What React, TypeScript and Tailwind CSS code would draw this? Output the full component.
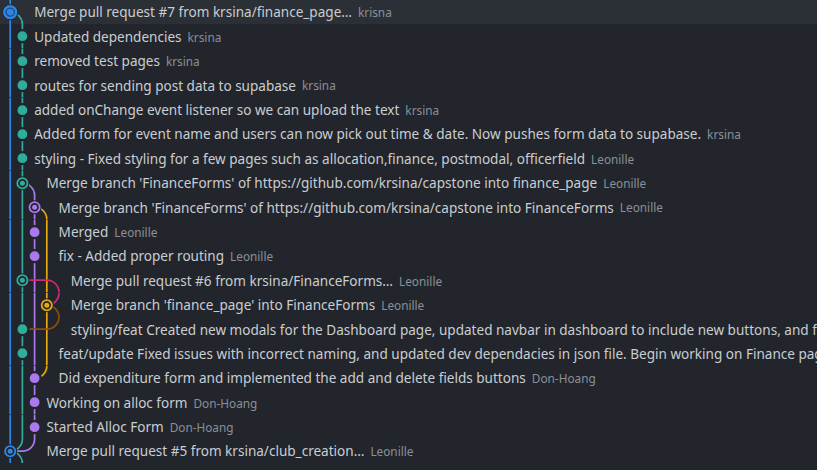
import React from "react";

// swimlane geometry (px)
const H = 24.4;
const C = H / 2;
const SW = 12.2;
const X = (k: number) => 10.2 + SW * k;

const BG = "#22262c";
const B = "#2f86e2";
const T = "#2fac9c";
const P = "#ab78f0";
const O = "#e8a90f";
const K = "#d0287a";
const N = "#8f4d08";

type Seg =
  | { t: "v"; k: number; c: string; part?: "top" | "bottom" }
  | { t: "out"; from: number; to: number; c: string }
  | { t: "in"; from: number; to: number; c: string };

type Dot = { k: number; c: string; kind: "dot" | "merge" | "head" };

type Row = {
  subject: string;
  author: string;
  lanes: number;
  segs: Seg[];
  dot: Dot;
  selected?: boolean;
};

const v = (k: number, c: string, part?: "top" | "bottom"): Seg => ({ t: "v", k, c, part });
const out = (from: number, to: number, c: string): Seg => ({ t: "out", from, to, c });
const inn = (from: number, to: number, c: string): Seg => ({ t: "in", from, to, c });

const rows: Row[] = [
  {
    subject: "Merge pull request #7 from krsina/finance_page…",
    author: "krisna",
    lanes: 2,
    segs: [v(0, B), out(0, 1, T)],
    dot: { k: 0, c: B, kind: "head" },
    selected: true,
  },
  { subject: "Updated dependencies", author: "krsina", lanes: 2, segs: [v(0, B), v(1, T)], dot: { k: 1, c: T, kind: "dot" } },
  { subject: "removed test pages", author: "krsina", lanes: 2, segs: [v(0, B), v(1, T)], dot: { k: 1, c: T, kind: "dot" } },
  { subject: "routes for sending post data to supabase", author: "krsina", lanes: 2, segs: [v(0, B), v(1, T)], dot: { k: 1, c: T, kind: "dot" } },
  { subject: "added onChange event listener so we can upload the text", author: "krsina", lanes: 2, segs: [v(0, B), v(1, T)], dot: { k: 1, c: T, kind: "dot" } },
  {
    subject: "Added form for event name and users can now pick out time & date. Now pushes form data to supabase.",
    author: "krsina",
    lanes: 2,
    segs: [v(0, B), v(1, T)],
    dot: { k: 1, c: T, kind: "dot" },
  },
  {
    subject: "styling - Fixed styling for a few pages such as allocation,finance, postmodal, officerfield",
    author: "Leonille",
    lanes: 2,
    segs: [v(0, B), v(1, T)],
    dot: { k: 1, c: T, kind: "dot" },
  },
  {
    subject: "Merge branch 'FinanceForms' of https://github.com/krsina/capstone into finance_page",
    author: "Leonille",
    lanes: 3,
    segs: [v(0, B), v(1, T), out(1, 2, P)],
    dot: { k: 1, c: T, kind: "merge" },
  },
  {
    subject: "Merge branch 'FinanceForms' of https://github.com/krsina/capstone into FinanceForms",
    author: "Leonille",
    lanes: 4,
    segs: [v(0, B), v(1, T), v(2, P), out(2, 3, O)],
    dot: { k: 2, c: P, kind: "merge" },
  },
  { subject: "Merged", author: "Leonille", lanes: 4, segs: [v(0, B), v(1, T), v(2, P), v(3, O)], dot: { k: 2, c: P, kind: "dot" } },
  { subject: "fix - Added proper routing", author: "Leonille", lanes: 4, segs: [v(0, B), v(1, T), v(2, P), v(3, O)], dot: { k: 2, c: P, kind: "dot" } },
  {
    subject: "Merge pull request #6 from krsina/FinanceForms…",
    author: "Leonille",
    lanes: 5,
    segs: [v(0, B), v(1, T), v(2, P), v(3, O), out(1, 4, K)],
    dot: { k: 1, c: T, kind: "merge" },
  },
  {
    subject: "Merge branch 'finance_page' into FinanceForms",
    author: "Leonille",
    lanes: 5,
    segs: [v(0, B), v(1, T), v(2, P), v(3, O), inn(4, 3, K), out(3, 4, N)],
    dot: { k: 3, c: O, kind: "merge" },
  },
  {
    subject:
      "styling/feat Created new modals for the Dashboard page, updated navbar in dashboard to include new buttons, and fixed the finance page layout",
    author: "Leonille",
    lanes: 5,
    segs: [v(0, B), v(1, T), v(2, P), v(3, O), inn(4, 1, N)],
    dot: { k: 1, c: T, kind: "dot" },
  },
  {
    subject:
      "feat/update Fixed issues with incorrect naming, and updated dev dependacies in json file. Begin working on Finance page",
    author: "Leonille",
    lanes: 4,
    segs: [v(0, B), v(1, T), v(2, P), v(3, O)],
    dot: { k: 1, c: T, kind: "dot" },
  },
  {
    subject: "Did expenditure form and implemented the add and delete fields buttons",
    author: "Don-Hoang",
    lanes: 4,
    segs: [v(0, B), v(1, T), v(2, P), inn(3, 2, O)],
    dot: { k: 2, c: P, kind: "dot" },
  },
  { subject: "Working on alloc form", author: "Don-Hoang", lanes: 3, segs: [v(0, B), v(1, T), v(2, P)], dot: { k: 2, c: P, kind: "dot" } },
  { subject: "Started Alloc Form", author: "Don-Hoang", lanes: 3, segs: [v(0, B), v(1, T), v(2, P)], dot: { k: 2, c: P, kind: "dot" } },
  {
    subject: "Merge pull request #5 from krsina/club_creation…",
    author: "Leonille",
    lanes: 3,
    segs: [v(0, B), inn(1, 0, T), inn(2, 0, P), out(0, 1, T)],
    dot: { k: 0, c: B, kind: "merge" },
  },
];

function segPath(s: Seg) {
  if (s.t === "v") {
    const y1 = s.part === "bottom" ? C : 0;
    const y2 = s.part === "top" ? C : H;
    return `M ${X(s.k)} ${y1} V ${y2}`;
  }
  if (s.t === "out") {
    // -\  horizontal from commit, then arc down into the new lane
    return `M ${X(s.from)} ${C} H ${X(s.to - 1)} A ${SW} ${SW} 0 0 1 ${X(s.to)} ${H}`;
  }
  // lane coming from above, arcs into the commit row
  return `M ${X(s.from)} 0 A ${SW} ${SW} 0 0 1 ${X(s.from - 1)} ${C} H ${X(s.to)}`;
}

function Graph({ row }: { row: Row }) {
  const w = X(row.lanes) - 0.4;
  const { k, c, kind } = row.dot;
  const cx = X(k);
  return (
    <svg width={w} height={H} className="shrink-0 block">
      {row.segs.map((s, i) => (
        <path key={i} d={segPath(s)} fill="none" stroke={s.c} strokeWidth={1.7} />
      ))}
      {kind === "dot" && <circle cx={cx} cy={C} r={6} fill={c} stroke={BG} strokeWidth={2.2} />}
      {kind === "merge" && (
        <>
          <circle cx={cx} cy={C} r={7} fill={BG} />
          <circle cx={cx} cy={C} r={5.1} fill={BG} stroke={c} strokeWidth={1.8} />
          <circle cx={cx} cy={C} r={2.5} fill={c} />
        </>
      )}
      {kind === "head" && (
        <>
          <circle cx={cx} cy={C} r={7.6} fill={c} stroke={BG} strokeWidth={1} />
          <circle cx={cx} cy={C} r={4.1} fill="none" stroke="#1b4f8a" strokeWidth={1.4} />
          <circle cx={cx} cy={C} r={2.7} fill={c} />
        </>
      )}
    </svg>
  );
}

export default function App() {
  return (
    <div
      className="w-[817px] h-[470px] overflow-hidden bg-[#22262c] text-[#cacdd2]"
      style={{ fontFamily: '"Noto Sans", "Open Sans", sans-serif' }}
    >
      {rows.map((row, i) => (
        <div
          key={i}
          className={`flex items-center h-[24.4px] whitespace-nowrap overflow-hidden ${row.selected ? "bg-[#2b2f36]" : ""}`}
        >
          <Graph row={row} />
          <span className="pt-[2px] text-[13.55px] leading-none">{row.subject}</span>
          <span className="ml-[6px] pt-[2px] text-[11.8px] leading-none text-[#8b9098]">{row.author}</span>
        </div>
      ))}
    </div>
  );
}
